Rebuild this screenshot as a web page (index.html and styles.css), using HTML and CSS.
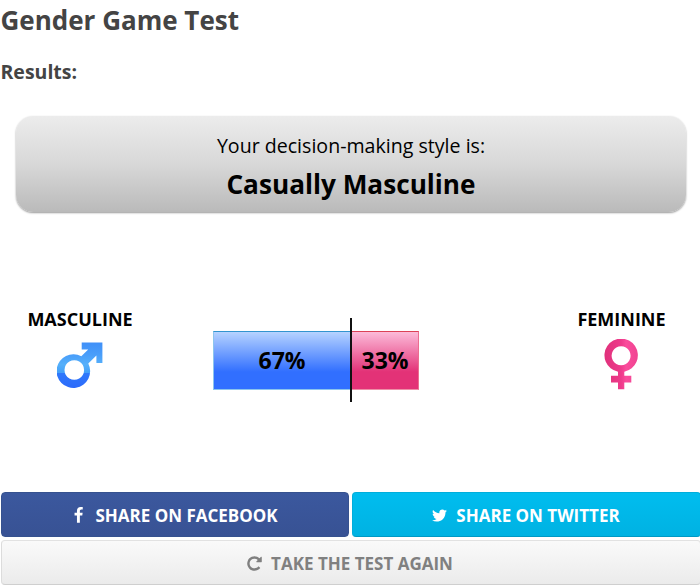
FILE: index.html
```html
<!DOCTYPE html>
<html lang="en">
<head>
  <meta charset="UTF-8">
  <meta name="viewport" content="width=device-width, initial-scale=1.0">
  <title>Gender Game Test</title>
  <link rel="stylesheet" href="styles.css">
</head>
<body>
  <h1>Gender Game Test</h1>
  <h2>Results:</h2>

  <!-- Result banner -->
  <div class="result">
    <p class="result-intro">Your decision-making style is:</p>
    <p class="result-style">Casually Masculine</p>
  </div>

  <!-- Score chart -->
  <div class="chart">
    <div class="side side-left">
      <span class="side-label">MASCULINE</span>
      <svg class="symbol" width="46" height="46" viewBox="0 0 46 46">
        <defs>
          <linearGradient id="blue" gradientUnits="userSpaceOnUse" x1="0" y1="0" x2="0" y2="45">
            <stop offset="0" stop-color="#3f8ff8"/>
            <stop offset="0.3" stop-color="#4a9ffa"/>
            <stop offset="0.5" stop-color="#55b0fa"/>
            <stop offset="0.68" stop-color="#43a0f9"/>
            <stop offset="0.7" stop-color="#2f78fb"/>
            <stop offset="1" stop-color="#2c6bfb"/>
          </linearGradient>
        </defs>
        <path fill="url(#blue)" fill-rule="evenodd" d="M24.7 0.6H45.4V21H39.4V13.4L31.3 21.4A16.8 16.8 0 1 1 24.3 14.3L31.2 7.5H24.7ZM17.3 18.2a9.8 9.8 0 1 0 0.01 0Z"/>
      </svg>
    </div>

    <div class="bar">
      <div class="bar-part bar-blue" style="width: 67%">67%</div>
      <div class="bar-part bar-pink" style="width: 33%">33%</div>
      <div class="marker"></div>
    </div>

    <div class="side side-right">
      <span class="side-label">FEMININE</span>
      <svg class="symbol" width="36" height="52" viewBox="0 0 36 52">
        <defs>
          <linearGradient id="pink" x1="0" y1="0" x2="1" y2="0">
            <stop offset="0" stop-color="#e0317b"/>
            <stop offset="0.5" stop-color="#ee3a8b"/>
            <stop offset="0.65" stop-color="#fa4c9c"/>
            <stop offset="1" stop-color="#f04391"/>
          </linearGradient>
        </defs>
        <path fill="url(#pink)" fill-rule="evenodd" d="M15 32.7A16.7 16.7 0 1 1 21.3 32.7V36.7H28.3V43.4H21.3V50.3H15V43.4H8V36.7H15ZM18.1 7.2a9.5 9.5 0 1 0 0.01 0Z"/>
      </svg>
    </div>
  </div>

  <!-- Buttons -->
  <div class="buttons">
    <a class="btn btn-facebook">
      <svg class="icon" viewBox="0 0 1792 1792"><path d="M1343 12v264h-157q-86 0-116 36t-30 108v189h293l-39 296h-254v759h-306v-759h-255v-296h255v-218q0-186 104-288.5t277-102.5q147 0 228 12z"/></svg>
      SHARE ON FACEBOOK
    </a>
    <a class="btn btn-twitter">
      <svg class="icon" viewBox="0 0 1792 1792"><path d="M1684 408q-67 98-162 167 1 14 1 42 0 130-38 259.5t-115.5 248.5-184.5 210.5-258 146-323 54.5q-271 0-496-145 35 4 78 4 225 0 401-138-105-2-188-64.5t-114-159.5q33 5 61 5 43 0 85-11-112-23-185.5-111.5t-73.5-205.5v-4q68 38 146 41-66-44-105-115t-39-154q0-88 44-163 121 149 294.5 238.5t371.5 99.5q-8-38-8-74 0-134 94.5-228.5t228.5-94.5q140 0 236 102 109-21 205-78-37 115-142 178 93-10 186-50z"/></svg>
      SHARE ON TWITTER
    </a>
    <a class="btn btn-again">
      <svg class="icon" viewBox="0 0 1792 1792"><path d="M1664 256v448q0 26-19 45t-45 19h-448q-42 0-59-40-17-39 14-69l138-138q-148-137-349-137-104 0-198.5 40.5t-163.5 109.5-109.5 163.5-40.5 198.5 40.5 198.5 109.5 163.5 163.5 109.5 198.5 40.5q119 0 225-52t179-147q7-10 23-12 15 0 25 9l137 138q9 8 9.5 20.5t-7.5 22.5q-109 132-264 204.5t-327 72.5q-156 0-298-61t-245-164-164-245-61-298 61-298 164-245 245-164 298-61q147 0 284.5 55.5t244.5 156.5l130-129q29-31 70-14 39 17 39 59z"/></svg>
      TAKE THE TEST AGAIN
    </a>
  </div>
</body>
</html>
```
FILE: styles.css
```css
* {
  box-sizing: border-box;
}
body {
  margin: 0;
  height: 585px;
  overflow: hidden;
  background-color: #fff;
  color: #444;
  font-family: "Open Sans", sans-serif;
}
h1 {
  margin: 0;
  padding-left: 0.5px;
  font-size: 26px;
  line-height: 40px;
  font-weight: 700;
}
h2 {
  margin: 18px 0 30px;
  padding-left: 0.5px;
  font-size: 19.5px;
  line-height: 28px;
  font-weight: 700;
}
.result {
  width: 670px;
  height: 96px;
  margin: 0 0 0 16px;
  padding-top: 15px;
  border-radius: 17px;
  background: linear-gradient(#ececec, #d8d8d8 50%, #bababa);
  box-shadow: 0 1px 2px rgba(0, 0, 0, 0.4);
  color: #000;
  text-align: center;
}
.result p {
  margin: 0;
}
.result-intro {
  font-size: 19.6px;
  line-height: 30px;
}
.result-style {
  font-size: 26.2px;
  line-height: 46px;
  font-weight: 700;
}
.chart {
  display: flex;
  justify-content: space-between;
  height: 185px;
  margin: 95px 34px 0 27px;
  color: #000;
}
.side {
  display: flex;
  flex-direction: column;
  align-items: center;
  font-size: 18px;
  line-height: 24px;
  font-weight: 700;
}
.side-left {
  width: 106px;
}
.side-left .symbol {
  margin: 11px 1px 0 0;
}
.side-right {
  width: 89px;
}
.side-right .symbol {
  margin: 8px 2px 0 0;
}
.bar {
  position: relative;
  display: flex;
  width: 206px;
  height: 59px;
  margin: 24px 78px 0 0;
}
.bar-part {
  border: 1px solid;
  text-align: center;
  font-size: 23px;
  line-height: 57px;
  font-weight: 700;
}
.bar-blue {
  border-color: #3294cf #3294cf #8cc5ee #8cc5ee;
  background: linear-gradient(#b6d3ff, #316fff 70%);
}
.bar-pink {
  border-color: #dc4257 #ec6e90 #ee8fa8 #dc4257;
  background: linear-gradient(#fcbbd9, #e33277 70%);
}
.marker {
  position: absolute;
  left: 136.5px;
  top: -13px;
  width: 2px;
  height: 84px;
  background-color: #111;
}
.buttons {
  display: flex;
  flex-wrap: wrap;
  gap: 3px;
  width: 700px;
  margin-left: 1px;
}
.btn {
  display: flex;
  justify-content: center;
  align-items: center;
  gap: 8px;
  height: 45px;
  padding: 1px 2px 0 0;
  border: 1px solid;
  border-radius: 4px;
  color: #fff;
  font-size: 17px;
  font-weight: 700;
}
.btn-facebook {
  width: 348px;
  border-color: #36528f;
  background: linear-gradient(#3b589e, #385294);
}
.btn-twitter {
  width: 349px;
  border-color: #00aedb #00aedb #0099c4;
  background: linear-gradient(#00bdef, #00b2e2);
}
.btn-again {
  width: 700px;
  padding-right: 3px;
  border-color: #e2e2e2 #dcdcdc #cfcfcf;
  background: linear-gradient(#fafafa, #ebebeb);
  color: #808080;
}
.icon {
  width: 17px;
  height: 17px;
  fill: currentColor;
}
```
